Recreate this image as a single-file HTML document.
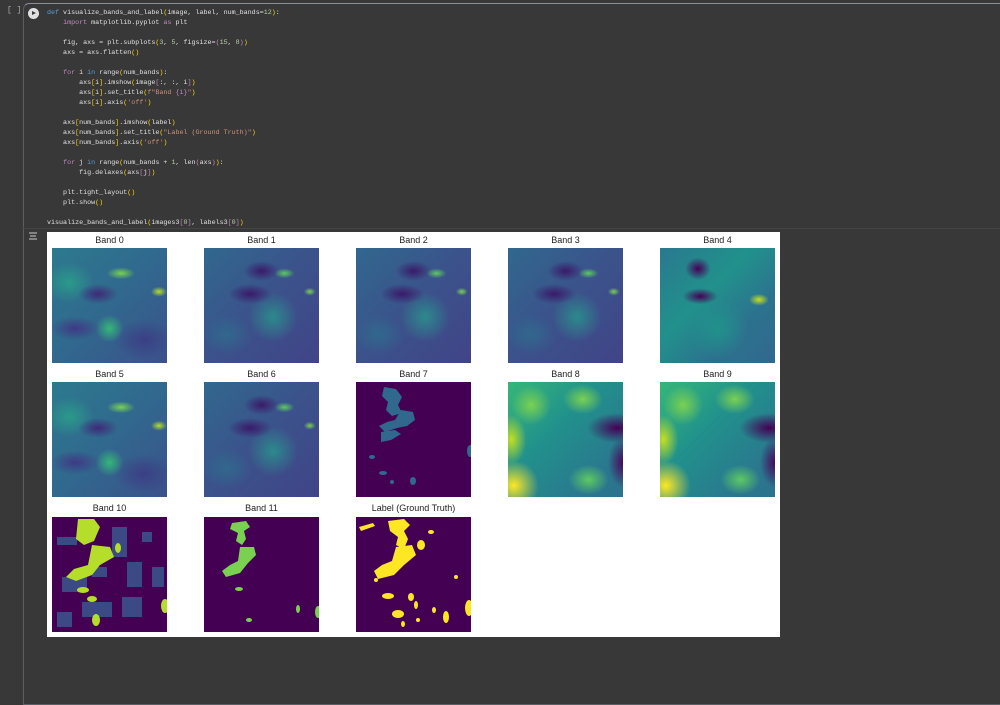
<!DOCTYPE html>
<html><head><style>
body{margin:0;width:1000px;height:642px;background:#383838;overflow:hidden;position:relative;font-family:"Liberation Sans",sans-serif}
.cell{position:absolute;left:23px;top:3px;width:990px;height:700px;border:1px solid #5a5f66;border-right:none;border-radius:6px 0 0 0;border-top-color:#8a8f99}
.brk{position:absolute;left:7px;top:6px;color:#aaa;font:8px "Liberation Mono",monospace}
.play{position:absolute;left:28px;top:8px;width:11px;height:11px;border-radius:50%;background:#e0e0e0}
.play:after{content:"";position:absolute;left:4px;top:3px;border-left:4px solid #383838;border-top:2.5px solid transparent;border-bottom:2.5px solid transparent}
pre{position:absolute;left:47px;top:8px;margin:0;font:6.7px/10px "Liberation Mono",monospace;color:#e0e0e0}
.k{color:#569cd6}.p{color:#ffd700}.s{color:#ce9178}.n{color:#b5cea8}.c{color:#c586c0}
.outsep{position:absolute;left:22px;top:228px;width:978px;height:1px;background:#444}
.oicon{position:absolute;left:29px;top:232px;width:8px;height:8px}
.panel{position:absolute;left:47px;top:232px;width:733px;height:405px;background:#fff}
.t{position:absolute;width:115px;text-align:center;font-size:9px;color:#222}
.im{position:absolute;width:115px;height:115px}
svg.im{display:block}
.a{background:
radial-gradient(ellipse 14px 6px at 60% 22%,#7ad151,transparent),
radial-gradient(ellipse 8px 5px at 93% 38%,#b5de2b,transparent),
radial-gradient(ellipse 20px 10px at 40% 40%,#3e2a78,transparent),
radial-gradient(ellipse 25px 12px at 20% 70%,#3e3a85,transparent),
radial-gradient(ellipse 20px 20px at 50% 70%,#35b779,transparent 70%),
radial-gradient(ellipse 30px 20px at 80% 80%,#3b3f85,transparent),
radial-gradient(ellipse 25px 20px at 15% 30%,#2a9a8a,transparent),
linear-gradient(135deg,#2c7a8e,#31688e 50%,#3b528b)}
.b{background:
radial-gradient(ellipse 10px 5px at 70% 22%,#5ec962,transparent),
radial-gradient(ellipse 6px 4px at 92% 38%,#7ad151,transparent),
radial-gradient(ellipse 22px 10px at 40% 40%,#3a1a6a,transparent),
radial-gradient(ellipse 18px 10px at 50% 20%,#3a1a6a,transparent),
radial-gradient(ellipse 25px 25px at 60% 60%,#2c8a8d,transparent),
radial-gradient(ellipse 25px 20px at 20% 75%,#31688e,transparent),
linear-gradient(135deg,#31688e,#3b528b 50%,#414487)}
.d{background:
radial-gradient(ellipse 10px 6px at 86% 45%,#c8e020,transparent),
radial-gradient(ellipse 22px 10px at 35% 42%,#440154,transparent 80%),
radial-gradient(ellipse 16px 14px at 33% 18%,#440154,transparent 80%),
radial-gradient(ellipse 30px 30px at 50% 70%,#21918c,transparent),
linear-gradient(135deg,#2a788e,#21918c 40%,#2c728e 70%,#31688e)}
.f{background:
radial-gradient(ellipse 30px 15px at 95% 40%,#440154,transparent),
radial-gradient(ellipse 15px 25px at 100% 70%,#46085c,transparent),
radial-gradient(ellipse 25px 25px at 5% 90%,#fde725,transparent),
radial-gradient(ellipse 15px 25px at 3% 50%,#c2df23,transparent),
radial-gradient(ellipse 20px 20px at 20% 20%,#7ad151,transparent),
radial-gradient(ellipse 20px 15px at 65% 15%,#7ad151,transparent),
radial-gradient(ellipse 20px 15px at 70% 85%,#5ec962,transparent),
linear-gradient(135deg,#35b779,#21918c 40%,#2a788e 80%,#2c728e)}
</style></head><body>
<div class="cell"></div>
<div class="brk">[ ]</div>
<div class="play"></div>
<pre><span class="k">def</span> visualize_bands_and_label<span class="p">(</span>image, label, num_bands=<span class="n">12</span><span class="p">)</span>:
    <span class="c">import</span> matplotlib.pyplot <span class="c">as</span> plt

    fig, axs = plt.subplots<span class="p">(</span><span class="n">3</span>, <span class="n">5</span>, figsize=<span class="c">(</span><span class="n">15</span>, <span class="n">8</span><span class="c">)</span><span class="p">)</span>
    axs = axs.flatten<span class="p">()</span>

    <span class="c">for</span> i <span class="k">in</span> range<span class="p">(</span>num_bands<span class="p">)</span>:
        axs<span class="p">[</span>i<span class="p">]</span>.imshow<span class="p">(</span>image<span class="c">[</span>:, :, i<span class="c">]</span><span class="p">)</span>
        axs<span class="p">[</span>i<span class="p">]</span>.set_title<span class="p">(</span><span class="s">f"Band </span><span class="c">{i}</span><span class="s">"</span><span class="p">)</span>
        axs<span class="p">[</span>i<span class="p">]</span>.axis<span class="p">(</span><span class="s">'off'</span><span class="p">)</span>

    axs<span class="p">[</span>num_bands<span class="p">]</span>.imshow<span class="p">(</span>label<span class="p">)</span>
    axs<span class="p">[</span>num_bands<span class="p">]</span>.set_title<span class="p">(</span><span class="s">"Label (Ground Truth)"</span><span class="p">)</span>
    axs<span class="p">[</span>num_bands<span class="p">]</span>.axis<span class="p">(</span><span class="s">'off'</span><span class="p">)</span>

    <span class="c">for</span> j <span class="k">in</span> range<span class="p">(</span>num_bands + <span class="n">1</span>, len<span class="c">(</span>axs<span class="c">)</span><span class="p">)</span>:
        fig.delaxes<span class="p">(</span>axs<span class="c">[</span>j<span class="c">]</span><span class="p">)</span>

    plt.tight_layout<span class="p">()</span>
    plt.show<span class="p">()</span>

visualize_bands_and_label<span class="p">(</span>images3<span class="c">[</span><span class="n">0</span><span class="c">]</span>, labels3<span class="c">[</span><span class="n">0</span><span class="c">]</span><span class="p">)</span></pre>
<div class="outsep"></div>
<svg class="oicon" viewBox="0 0 8 8"><path d="M0 1H8M1 4H7M0 7H8" stroke="#ccc" stroke-width="1"/></svg>
<div class="panel">
<div class="t" style="left:5px;top:3px">Band 0</div><div class="im a" style="left:5px;top:16px"></div>
<div class="t" style="left:157px;top:3px">Band 1</div><div class="im b" style="left:157px;top:16px"></div>
<div class="t" style="left:309px;top:3px">Band 2</div><div class="im b" style="left:309px;top:16px"></div>
<div class="t" style="left:461px;top:3px">Band 3</div><div class="im b" style="left:461px;top:16px"></div>
<div class="t" style="left:613px;top:3px">Band 4</div><div class="im d" style="left:613px;top:16px"></div>
<div class="t" style="left:5px;top:137px">Band 5</div><div class="im a" style="left:5px;top:150px"></div>
<div class="t" style="left:157px;top:137px">Band 6</div><div class="im b" style="left:157px;top:150px"></div>
<div class="t" style="left:309px;top:137px">Band 7</div>
<svg class="im" style="left:309px;top:150px" viewBox="0 0 115 115"><rect width="115" height="115" fill="#440154"/><g fill="#31688e"><path d="M28 5l12 2 6 8-4 8 4 8-10 3-6-6 2-8-6-6z"/><path d="M45 28l12 2 2 8-8 6-10 2-12 4-6-6 8-4 8-2z"/><path d="M25 50l14-2 6 4-10 6-10 2z"/><ellipse cx="27" cy="91" rx="4" ry="2"/><ellipse cx="36" cy="100" rx="2" ry="2"/><ellipse cx="57" cy="99" rx="3" ry="4"/><ellipse cx="114" cy="69" rx="3" ry="6"/><ellipse cx="16" cy="75" rx="3" ry="2"/></g></svg>
<div class="t" style="left:461px;top:137px">Band 8</div><div class="im f" style="left:461px;top:150px"></div>
<div class="t" style="left:613px;top:137px">Band 9</div><div class="im f" style="left:613px;top:150px"></div>
<div class="t" style="left:5px;top:271px">Band 10</div>
<svg class="im" style="left:5px;top:285px" viewBox="0 0 115 115"><rect width="115" height="115" fill="#440154"/><g fill="#3b528b" opacity=".9"><rect x="5" y="20" width="20" height="8"/><rect x="60" y="10" width="15" height="30"/><rect x="75" y="45" width="15" height="25"/><rect x="100" y="50" width="12" height="20"/><rect x="10" y="60" width="25" height="15"/><rect x="30" y="85" width="30" height="15"/><rect x="70" y="80" width="20" height="20"/><rect x="5" y="95" width="15" height="15"/><rect x="40" y="50" width="15" height="10"/><rect x="90" y="15" width="10" height="10"/></g><g fill="#b5de2b"><path d="M26 2l16 0 6 8-6 14-10 4-8-6z"/><path d="M40 28l18 2 4 10-14 8-8 10-16 6-10-4 8-8 14-4z"/><ellipse cx="31" cy="73" rx="6" ry="3"/><ellipse cx="44" cy="103" rx="4" ry="6"/><ellipse cx="113" cy="89" rx="4" ry="7"/><ellipse cx="66" cy="31" rx="3" ry="5"/><ellipse cx="40" cy="82" rx="5" ry="3"/></g></svg>
<div class="t" style="left:157px;top:271px">Band 11</div>
<svg class="im" style="left:157px;top:285px" viewBox="0 0 115 115"><rect width="115" height="115" fill="#440154"/><g fill="#7ad151"><path d="M28 6l14-2 4 6-6 4 2 8-4 6-6-4 2-8-8-4z"/><path d="M36 30l14 0 2 8-8 8-8 10-14 4-4-6 8-6 8-4z"/><ellipse cx="35" cy="72" rx="4" ry="2"/><ellipse cx="45" cy="103" rx="3" ry="2"/><ellipse cx="114" cy="95" rx="3" ry="6"/><ellipse cx="94" cy="92" rx="2" ry="4"/></g></svg>
<div class="t" style="left:299px;top:271px;width:135px">Label (Ground Truth)</div>
<svg class="im" style="left:309px;top:285px" viewBox="0 0 115 115"><rect width="115" height="115" fill="#440154"/><g fill="#fde725"><path d="M32 4l16-2 6 6-6 6 4 8-4 10-8-4 2-8-8-6z"/><path d="M40 30l16-2 4 10-12 10-10 10-16 4-4-8 8-6 10-4z"/><path d="M3 10l14-4 2 3-14 5z"/><ellipse cx="32" cy="79" rx="6" ry="3"/><ellipse cx="42" cy="97" rx="6" ry="4"/><ellipse cx="113" cy="91" rx="4" ry="8"/><ellipse cx="65" cy="28" rx="4" ry="5"/><ellipse cx="90" cy="100" rx="3" ry="6"/><ellipse cx="55" cy="80" rx="3" ry="4"/><ellipse cx="60" cy="88" rx="2" ry="4"/><ellipse cx="78" cy="93" rx="2" ry="3"/><ellipse cx="47" cy="107" rx="2" ry="3"/><ellipse cx="62" cy="103" rx="2" ry="2"/><ellipse cx="20" cy="63" rx="2" ry="2"/><ellipse cx="75" cy="15" rx="3" ry="2"/><ellipse cx="100" cy="60" rx="2" ry="2"/></g></svg>
</div>
</body></html>
